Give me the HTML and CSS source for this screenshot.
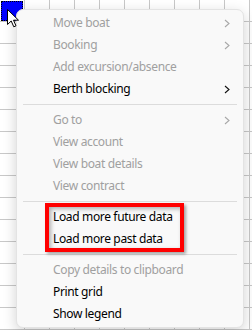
FILE: index.html
```html
<!DOCTYPE html>
<html lang="en">
<head>
    <meta charset="UTF-8">
    <title>Berth grid menu</title>
    <link rel="stylesheet" href="styles.css">
</head>
<body>
    <div class="sheet">
        <div class="cell-selected"></div>

        <div class="menu">
            <div class="item disabled">Move boat <span class="chev"><svg width="6" height="9" viewBox="0 0 6 9"><path d="M1 1 L5 4.5 L1 8" /></svg></span></div>
            <div class="item disabled">Booking <span class="chev"><svg width="6" height="9" viewBox="0 0 6 9"><path d="M1 1 L5 4.5 L1 8" /></svg></span></div>
            <div class="item disabled">Add excursion/absence</div>
            <div class="item">Berth blocking <span class="chev"><svg width="6" height="9" viewBox="0 0 6 9"><path d="M1 1 L5 4.5 L1 8" /></svg></span></div>
            <div class="sep"></div>
            <div class="item disabled">Go to <span class="chev"><svg width="6" height="9" viewBox="0 0 6 9"><path d="M1 1 L5 4.5 L1 8" /></svg></span></div>
            <div class="item disabled">View account</div>
            <div class="item disabled">View boat details</div>
            <div class="item disabled">View contract</div>
            <div class="sep"></div>
            <div class="item">Load more future data</div>
            <div class="item">Load more past data</div>
            <div class="sep"></div>
            <div class="item disabled">Copy details to clipboard</div>
            <div class="item">Print grid</div>
            <div class="item">Show legend</div>

            <!-- annotation box drawn over the two load items -->
            <div class="highlight"></div>
        </div>

        <svg class="cursor" width="13" height="19" viewBox="0 0 13 19">
            <path d="M0.5 0.5 V15.5 L4.2 12 L6.8 17.8 L9 16.8 L6.5 11.2 H11.5 Z" />
        </svg>
    </div>
</body>
</html>
```

FILE: styles.css
```css
body {
    margin: 0;
    padding: 0;
    font-family: 'Noto Sans', 'Open Sans', sans-serif;
    font-size: 12px;
    letter-spacing: -0.35px;
}
.sheet {
    position: relative;
    width: 252px;
    height: 330px;
    overflow: hidden;
    background-color: #fff;
    background-image:
        linear-gradient(to right, transparent 24px, #c8c8c8 24px, #c8c8c8 25px, transparent 25px),
        linear-gradient(to bottom, transparent 21px, #c8c8c8 21px, #c8c8c8 22px, transparent 22px);
    background-size: 25px 22px;
}
.cell-selected {
    width: 20px;
    height: 18px;
    background: #0000ff;
    border: 1px dotted #ffe000;
    outline: 1px dotted #000;
    outline-offset: -1px;
    margin: 1px 0 0 1px;
}
.menu {
    position: absolute;
    left: 16px;
    top: 9px;
    width: 226px;
    padding: 2px 0;
    background: #f9f9f9;
    border: 1px solid #e3e3e3;
    border-radius: 7px;
    box-shadow: 0 4px 14px rgba(0, 0, 0, 0.18);
}
.item {
    position: relative;
    height: 22px;
    line-height: 22px;
    padding-left: 36px;
    color: #000;
    white-space: nowrap;
}
.item.disabled { color: #a0a0a0; }
.chev {
    position: absolute;
    right: 13px;
    top: 7px;
    height: 9px;
    line-height: 0;
}
.chev svg path { fill: none; stroke: #111; stroke-width: 1.1; }
.item.disabled .chev svg path { stroke: #a8a8a8; }
.sep {
    height: 1px;
    background: #dcdcdc;
    margin: 4px 6px 4px 6px;
}
.highlight {
    position: absolute;
    left: 28px;
    top: 193px;
    width: 131px;
    height: 41px;
    border: 4px solid #f00;
    box-shadow: 2px 2px 3px rgba(0, 0, 0, 0.35), inset 2px 2px 4px rgba(0, 0, 0, 0.3);
}
.cursor {
    position: absolute;
    left: 7px;
    top: 9px;
}
.cursor path { fill: #fff; stroke: #000; stroke-width: 1; }
```
